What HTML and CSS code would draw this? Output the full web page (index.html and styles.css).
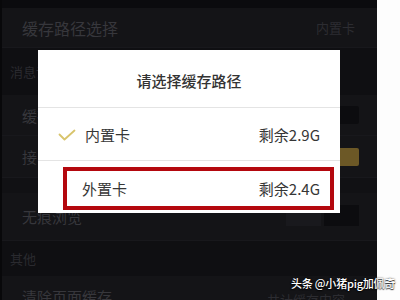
FILE: index.html
```html
<!DOCTYPE html>
<html lang="zh">
<head>
<meta charset="utf-8">
<link rel="stylesheet" href="styles.css">
</head>
<body>
<div class="stage">
  <div class="phone">
    <div class="top"></div>
    <div class="row row-a"><span class="label big">缓存路径选择</span><span class="value">内置卡</span></div>
    <div class="section sec-b"><span>消息设置</span></div>
    <div class="row row-c"><span class="label">缓存清理</span><span class="switch dark"></span></div>
    <div class="row row-d"><span class="label">接收推送</span><span class="switch gold"></span></div>
    <div class="spacer"></div>
    <div class="row row-e"><span class="label">无痕浏览</span><span class="switch twin"><i></i><i></i></span></div>
    <div class="section sec-f"><span>其他</span></div>
    <div class="row row-g"><span class="label">清除页面缓存</span><span class="value">共计缓存内容</span></div>
  </div>
  <div class="white-side"></div>

  <div class="dialog">
    <div class="dlg-title">请选择缓存路径</div>
    <div class="dlg-row first">
      <svg class="check" width="18" height="12" viewBox="0 0 18 12"><path d="M1.5 5.5 L6.5 10.5 L16.5 1.5" fill="none" stroke="#d8c46c" stroke-width="1.8" stroke-linecap="round" stroke-linejoin="round"/></svg>
      <span class="dlg-name">内置卡</span>
      <span class="dlg-free">剩余2.9G</span>
    </div>
    <div class="dlg-row second">
      <span class="dlg-name">外置卡</span>
      <span class="dlg-free">剩余2.4G</span>
      <div class="redbox"></div>
    </div>
  </div>

  <div class="watermark">头条 @小猪pig加佩奇</div>
</div>
</body>
</html>
```
FILE: styles.css
```css
html, body {
  margin: 0;
  padding: 0;
  background: #ffffff;
}
body {
  font-family: "Noto Sans CJK SC", "Noto Sans", sans-serif;
}
.stage {
  position: relative;
  width: 400px;
  height: 300px;
  overflow: hidden;
  display: flex;
  background: #fbfbfb;
}
.phone {
  width: 375px;
  margin-left: 2px;
  height: 300px;
  background: #101013;
  display: flex;
  flex-direction: column;
  overflow: hidden;
  box-shadow: -2px 0 0 #08080a;
}
.white-side {
  flex: 1;
  background: #fdfdfd;
}
.top {
  height: 8px;
  flex: none;
  background: #0b0b0e;
}
.row {
  flex: none;
  display: flex;
  align-items: center;
  justify-content: space-between;
  padding: 0 18px 0 20px;
  background: #141417;
  border-bottom: 1px solid #18181c;
  box-sizing: border-box;
}
.label {
  font-size: 15px;
  color: #37373c;
}
.label.big {
  font-size: 16px;
}
.value {
  font-size: 13px;
  color: #2c2c31;
  margin-right: 4px;
}
.row-a { height: 40px; }
.row-c { height: 41px; }
.row-d { height: 42px; }
.row-e { height: 48px; }
.row-g { height: 40px; align-items: flex-start; padding-top: 10px; }
.row-g .value { margin-right: 14px; margin-top: 4px; }
.section {
  flex: none;
  display: flex;
  align-items: center;
  padding-left: 8px;
  font-size: 13px;
  color: #2a2a2f;
  background: #0f0f12;
}
.sec-b { height: 47px; }
.sec-f { height: 35px; }
.spacer {
  flex: none;
  height: 15px;
  background: #111114;
}
.switch {
  display: block;
  width: 50px;
  height: 18px;
  border-radius: 2px;
}
.switch.dark { background: #0c0c0f; }
.switch.gold { background: #6c5826; }
.switch.twin {
  display: flex;
  gap: 3px;
  width: 73px;
  height: 21px;
  margin-top: -2px;
}
.switch.twin i {
  flex: 1;
  background: #19191d;
}
.switch.twin i + i {
  background: #0c0c0f;
}

.dialog {
  position: absolute;
  left: 38px;
  top: 50px;
  width: 302px;
  height: 163px;
  background: #ffffff;
  display: flex;
  flex-direction: column;
}
.dlg-title {
  height: 58px;
  flex: none;
  display: flex;
  align-items: center;
  justify-content: center;
  font-size: 15px;
  font-weight: 500;
  color: #333333;
  border-bottom: 1px solid #e4e4e4;
  box-sizing: border-box;
  padding-top: 3px;
}
.dlg-row {
  position: relative;
  display: flex;
  align-items: center;
  padding: 0 20px;
  font-size: 15px;
  color: #363636;
  box-sizing: border-box;
}
.dlg-row.first {
  height: 53px;
  border-bottom: 1px solid #e4e4e4;
}
.dlg-row.second {
  flex: 1;
  padding-left: 44px;
  padding-top: 2px;
}
.check {
  margin-right: 9px;
  margin-top: 2px;
}
.dlg-name {
  flex: 1;
}
.dlg-free {
  font-size: 15px;
  color: #363636;
}
.redbox {
  position: absolute;
  left: 25px;
  right: 6px;
  top: 6px;
  bottom: 3px;
  border: 4px solid #b4080e;
}
.watermark {
  position: absolute;
  left: 291px;
  top: 275px;
  font-family: "Noto Sans CJK SC", sans-serif;
  font-size: 11px;
  font-weight: 500;
  letter-spacing: -0.2px;
  color: #ffffff;
  text-shadow: 0 0 2px rgba(0,0,0,0.8), 0 1px 1px rgba(0,0,0,0.7);
  white-space: nowrap;
}
```
